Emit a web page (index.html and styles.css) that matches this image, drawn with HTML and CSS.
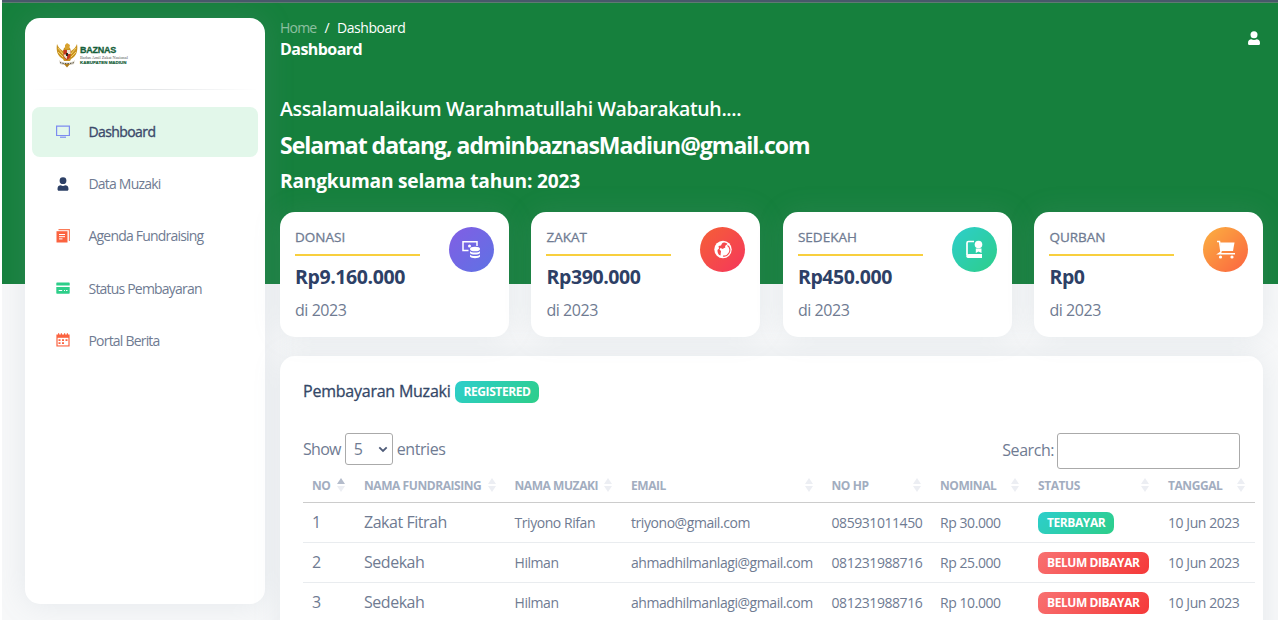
FILE: index.html
```html
<!DOCTYPE html>
<html lang="id">
<head>
<meta charset="utf-8">
<title>Dashboard</title>
<link rel="stylesheet" href="styles.css">
</head>
<body>
<div class="page">
  <aside class="sidebar">
    <div class="brand">
      <svg class="emblem" width="22" height="26" viewBox="0 0 22 26">
        <path d="M1 2c1 3 3 5 6 7l1-3 3-2 3 2 1 3c3-2 5-4 6-7 1 6 0 12-6 15l-1 2H8l-1-2C1 14 0 8 1 2z" fill="#c8921f"/>
        <path d="M2 6l5 6M2 10l5 5M20 6l-5 6M20 10l-5 5" stroke="#f0cf6b" stroke-width="1"/>
        <path d="M9 3l2-2 3 2-1 4H9z" fill="#d8a22f"/>
        <path d="M7.500 8h7v5c0 3-2 4-3.500 5-1.500-1-3.500-2-3.500-5z" fill="#c33a24"/>
        <path d="M11 8h3.500v4H11zM7.500 12.500H11V17c-2-1-3-2-3.500-4.500z" fill="#e8e2d4"/>
        <path d="M10 11h2v3h-2z" fill="#2c2418"/>
        <path d="M3 18c2 2 4 2.500 8 2.500s6-.5 8-2.500l-1 4c-2 1-4 1-7 1s-5 0-7-1z" fill="#d9d3c6"/>
        <path d="M4 20.500c3 1.500 11 1.500 14 0" fill="none" stroke="#55503f" stroke-width="1" stroke-dasharray="1.500 1"/>
        <path d="M8 22h6l-3 3.500z" fill="#b07c1a"/>
      </svg>
      <div class="brand-text">
        <div class="b1">BAZNAS</div>
        <div class="b2">Badan Amil Zakat Nasional</div>
        <div class="b3">KABUPATEN MADIUN</div>
      </div>
    </div>
    <div class="divider"></div>
    <nav class="menu">
      <a class="item active"><svg width="14" height="14" viewBox="0 0 14 14"><path d="M.6 1.100h12.800v9.400H.6z" fill="none" stroke="#7d8cf0" stroke-width="1.200"/><path d="M4 12.200h6" stroke="#7d8cf0" stroke-width="1.200"/></svg><span>Dashboard</span></a>
      <a class="item"><svg width="14" height="14" viewBox="0 0 14 14"><circle cx="7" cy="3.700" r="3.400" fill="#2d4066"/><path d="M1.500 12c0-2.700 1.500-3.700 3.400-3.700 1.200.8 3 .8 4.200 0 1.900 0 3.400 1 3.400 3.700 0 1.200-.4 1.800-1.500 1.800H3c-1.100 0-1.500-.6-1.500-1.800z" fill="#2d4066"/></svg><span>Data Muzaki</span></a>
      <a class="item"><svg width="14" height="14" viewBox="0 0 14 14"><path d="M2.500.6h10.900v11.400" fill="none" stroke="#fb7b58" stroke-width="1.100"/><path d="M.5 2.200h11v11.300H.5z" fill="#fb6340"/><path d="M3 5.500h6M3 7.700h6M3 9.900h3.500" stroke="#fff" stroke-width="1"/></svg><span>Agenda Fundraising</span></a>
      <a class="item"><svg width="14" height="14" viewBox="0 0 14 14"><path d="M1 1.500h12q.7 0 .7.700V4.500H.3V2.200q0-.7.700-.7zM.3 6h13.400v6q0 .7-.7.700H1q-.7 0-.7-.7z" fill="#2dce89"/><path d="M2.700 9.500h3.500M8 9.500h1M10 9.500h1.500" stroke="#fff" stroke-width="1"/></svg><span>Status Pembayaran</span></a>
      <a class="item"><svg width="14" height="14" viewBox="0 0 14 14"><path d="M.4 1.600H2V.3h1.200v1.300h1.600V.3H6v1.300h2V.3h1.200v1.300h1.600V.3H12v1.300h1.600v12H.4z" fill="#fb6340"/><path d="M1.600 4.800h10.800v7.600H1.600z" fill="#fff"/><path d="M2.500 7.200h2M6 7.200h2M9.500 7.200h2M2.500 10.200h2M6 10.200h2" stroke="#fb6340" stroke-width="1.800"/></svg><span>Portal Berita</span></a>
    </nav>
  </aside>
  <main class="main">
    <header class="top">
      <div>
        <div class="crumbs"><span class="home">Home</span><span class="sep">/</span><span>Dashboard</span></div>
        <div class="title">Dashboard</div>
      </div>
      <svg class="user" width="12" height="14" viewBox="0 0 12 14"><circle cx="6" cy="3.700" r="3.500" fill="#fff"/><path d="M0 12c0-2.600 1.500-3.700 3.300-3.700 1.600.9 3.800.9 5.400 0C10.500 8.300 12 9.400 12 12c0 1.400-.4 2-1.500 2h-9C.4 14 0 13.400 0 12z" fill="#fff"/></svg>
    </header>
    <section class="greeting">
      <div class="g1"><span>Assalamualaikum Warahmatullahi Wabarakatuh....</span></div>
      <div class="g2"><span>Selamat datang, adminbaznasMadiun@gmail.com</span></div>
      <div class="g3"><span>Rangkuman selama tahun: 2023</span></div>
    </section>
    <section class="stats">
      <article class="stat">
        <div class="figures"><div class="label">DONASI</div><div class="amount">Rp9.160.000</div><div class="period">di 2023</div></div>
        <div class="badge violet"><svg width="20" height="20" viewBox="0 0 20 20"><path d="M7.500 10.500H2V1.800h14V6" fill="none" stroke="#fff" stroke-width="1.500"/><circle cx="8.500" cy="6" r="1.500" fill="#fff"/><ellipse cx="14" cy="9" rx="5" ry="2.300" fill="#fff"/><path d="M9 11c1 2 9 2 10 0v2c-1 2-9 2-10 0zM9 14.500c1 2 9 2 10 0v2c-1 2.300-9 2.300-10 0z" fill="#fff"/></svg></div>
      </article>
      <article class="stat">
        <div class="figures"><div class="label">ZAKAT</div><div class="amount">Rp390.000</div><div class="period">di 2023</div></div>
        <div class="badge red"><svg width="20" height="20" viewBox="0 0 20 20"><circle cx="10" cy="9.500" r="8.700" fill="#fff"/><path d="M9 3.500c1-1.500 4-1 5.500.5l-2.500 2 .5 1.500L10 9l-2.500-1-1 1.500 1.500 1.500-.5 4.500C5 15 4.500 12 4.500 10L6 8.500 5.500 6 8 5.500z" fill="#f54a4c"/><path d="M10.500 8.500l4-2 2.500 2c.5 3-1 6-4 7.500l-3-.5L9 12z" fill="#fff"/><path d="M14.500 5.500c2.500 1.500 3 5 1.500 7.500s-4 3.500-6 3" fill="none" stroke="#f54a4c" stroke-width="1.100"/></svg></div>
      </article>
      <article class="stat">
        <div class="figures"><div class="label">SEDEKAH</div><div class="amount">Rp450.000</div><div class="period">di 2023</div></div>
        <div class="badge teal"><svg width="20" height="20" viewBox="0 0 20 20"><path d="M10 1.500H4.500Q3 1.500 3 3v12" fill="none" stroke="#fff" stroke-width="1.700"/><path d="M2.200 16q0-2 2.800-2h13v4H5q-2.800 0-2.800-2z" fill="#fff"/><circle cx="14.500" cy="4.500" r="3.800" fill="#fff"/><path d="M11.800 8.500h5.700v4.500l-3-1.500-2.700 1.500z" fill="#fff"/></svg></div>
      </article>
      <article class="stat">
        <div class="figures"><div class="label">QURBAN</div><div class="amount">Rp0</div><div class="period">di 2023</div></div>
        <div class="badge orange"><svg width="20" height="20" viewBox="0 0 20 20"><path d="M4 2.500h14.500L17 11H5z" fill="#fff"/><path d="M1 1.500h2.500L5 12l-2.500 1.800H19" fill="none" stroke="#fff" stroke-width="1.500"/><circle cx="4.500" cy="17" r="1.600" fill="#fff"/><circle cx="16" cy="17" r="1.600" fill="#fff"/></svg></div>
      </article>
    </section>
    <section class="panel">
      <div class="heading"><span class="htext">Pembayaran Muzaki</span><span class="pill ok">REGISTERED</span></div>
      <div class="tools">
        <label class="show"><span class="word">Show</span><span class="select">5<svg width="10" height="7" viewBox="0 0 10 7"><path d="M1.300 1.300L5 5l3.700-3.700" fill="none" stroke="#4e5b78" stroke-width="1.800"/></svg></span><span>entries</span></label>
        <label class="search"><span>Search:</span><input type="text"></label>
      </div>
      <table>
        <colgroup><col class="c1"><col class="c2"><col class="c3"><col class="c4"><col class="c5"><col class="c6"><col class="c7"><col class="c8"></colgroup>
        <thead><tr>
          <th><div>NO<i class="sort asc"></i></div></th><th><div>NAMA FUNDRAISING<i class="sort"></i></div></th><th><div>NAMA MUZAKI<i class="sort"></i></div></th><th><div>EMAIL<i class="sort"></i></div></th><th><div>NO HP<i class="sort"></i></div></th><th><div>NOMINAL<i class="sort"></i></div></th><th><div>STATUS<i class="sort"></i></div></th><th><div>TANGGAL<i class="sort"></i></div></th>
        </tr></thead>
        <tbody>
          <tr><td class="big">1</td><td class="big">Zakat Fitrah</td><td>Triyono Rifan</td><td>triyono@gmail.com</td><td>085931011450</td><td>Rp 30.000</td><td><span class="pill ok">TERBAYAR</span></td><td>10 Jun 2023</td></tr>
          <tr><td class="big">2</td><td class="big">Sedekah</td><td>Hilman</td><td>ahmadhilmanlagi@gmail.com</td><td>081231988716</td><td>Rp 25.000</td><td><span class="pill no">BELUM DIBAYAR</span></td><td>10 Jun 2023</td></tr>
          <tr><td class="big">3</td><td class="big">Sedekah</td><td>Hilman</td><td>ahmadhilmanlagi@gmail.com</td><td>081231988716</td><td>Rp 10.000</td><td><span class="pill no">BELUM DIBAYAR</span></td><td>10 Jun 2023</td></tr>
        </tbody>
      </table>
    </section>
  </main>
</div>
</body>
</html>
```
FILE: styles.css
```css
* { box-sizing: border-box; }
html, body { margin: 0; height: 620px; overflow: hidden; }
body { font-family: "Open Sans", "Noto Sans", sans-serif; color: #6f7b92; background: #fff; }
.page {
  height: 620px; margin: 0 2px; border-top: 2px solid #48586a; overflow: hidden;
  display: flex; align-items: flex-start; padding: 16px 15px 0 23px; gap: 15px;
  background: linear-gradient(#5f7a72 1px, #16803d 1px, #16803d 282px, #f7f8f9 282px);
}
.sidebar {
  width: 240px; height: 586px; flex: none; background: #fff; border-radius: 15px;
  box-shadow: 0 0 30px rgba(136, 152, 170, .17); padding: 0 7px;
}
.brand { height: 71px; padding: 24px 0 0 24px; display: flex; gap: 2px; }
.emblem { flex: none; }
.brand-text { color: #17603a; white-space: nowrap; padding-top: 4px; }
.b1 { font: bold 9px/9px "Liberation Sans", sans-serif; letter-spacing: -.25px; -webkit-text-stroke: .3px #17603a; }
.b2 { font: 4.300px/5px "Liberation Serif", serif; color: #555; }
.b3 { font: bold 4.400px/6px "Liberation Sans", sans-serif; letter-spacing: .05px; -webkit-text-stroke: .2px #17603a; }
.divider { height: 1px; background: linear-gradient(90deg, transparent, #e2e4e6, transparent); }
.menu { padding-top: 17px; display: flex; flex-direction: column; gap: 2px; }
.item {
  height: 50.200px; border-radius: 8px; display: flex; align-items: center; padding-left: 23.500px; gap: 19px;
  font-size: 14px; letter-spacing: -.8px; white-space: nowrap;
}
.item span { padding-bottom: 1px; }
.item svg { flex: none; margin-top: -1px; }
.item.active { background: #e2f7ea; color: #3c4a6b; letter-spacing: -.6px; -webkit-text-stroke: .35px #3c4a6b; }
.item.active svg { -webkit-text-stroke: 0; }
.main { flex: 1; min-width: 0; }
.top { display: flex; justify-content: space-between; height: 70px; color: #fff; }
.crumbs { font-size: 14px; line-height: 20px; display: flex; letter-spacing: -.45px; }
.home { opacity: .5; letter-spacing: -.8px; }
.sep { margin: 0 8px; }
.title { font-size: 16px; font-weight: 700; line-height: 22px; letter-spacing: -.55px; }
.user { margin: 13px 3px 0 0; }
.greeting { color: #fff; height: 124px; white-space: nowrap; }
.g1 { font-size: 19.500px; line-height: 42px; font-weight: 600; letter-spacing: -.36px; }
.g2 { font-size: 23px; line-height: 31px; font-weight: 700; letter-spacing: -1px; }
.g3 { font-size: 19.200px; line-height: 40px; font-weight: 700; letter-spacing: -.22px; }
.stats { display: grid; grid-template-columns: repeat(4, 228.600px); justify-content: space-between; }
.stat {
  height: 125px; padding: 15px; border-radius: 15px; background: #fff; display: flex; justify-content: space-between;
  box-shadow: 0 0 28px rgba(136, 152, 170, .15);
}
.figures { width: 125px; }
.label { font-size: 13.500px; line-height: 21px; height: 29px; border-bottom: 2px solid #f8cf3e; padding-bottom: 6px; -webkit-text-stroke: .3px #6f7b92; }
.amount { font-size: 19.500px; font-weight: 700; color: #2d4066; line-height: 27px; margin-top: 7px; letter-spacing: -.4px; }
.period { font-size: 16px; line-height: 24px; margin-top: 8px; letter-spacing: -.45px; }
.badge { width: 45px; height: 45px; border-radius: 50%; display: flex; align-items: center; justify-content: center; }
.violet { background: linear-gradient(135deg, #825ee4, #5e72e4); }
.red { background: linear-gradient(135deg, #f56036, #f5365c); }
.teal { background: linear-gradient(135deg, #2dcecc, #2dce89); }
.orange { background: linear-gradient(135deg, #fbb140, #fb6340); }
.panel {
  height: 300px; margin-top: 19px; padding: 20px 23px; background: #fff; border-radius: 15px;
  box-shadow: 0 0 28px rgba(136, 152, 170, .15);
}
.heading { display: flex; align-items: center; gap: 4px; height: 30px; font-size: 16px; color: #344767; }
.htext { letter-spacing: -.23px; -webkit-text-stroke: .3px #344767; padding-bottom: 1px; }
.pill {
  display: inline-block; height: 22px; line-height: 22px; padding: 0 9px; border-radius: 7px;
  color: #fff; font-size: 12px; font-weight: 700; letter-spacing: -.42px; vertical-align: middle;
}
.ok { background: linear-gradient(135deg, #2dcecc, #2dce89); }
.no { background: linear-gradient(135deg, #f87171, #f53939); }
.heading .pill { margin-top: 2px; }
.tools { display: flex; justify-content: space-between; height: 36px; margin-top: 27px; font-size: 16px; letter-spacing: -.45px; }
.show { display: flex; gap: 4px; align-items: center; height: 32px; }
.word { letter-spacing: -.7px; }
.select {
  width: 48px; height: 32px; border: 1px solid #aaa; border-radius: 3px; padding: 0 4px 0 8px;
  display: flex; align-items: center; justify-content: space-between;
}
.search { display: flex; gap: 3px; align-items: center; }
.search span { padding-bottom: 2px; }
.search input { width: 183px; height: 36px; border: 1px solid #aaa; border-radius: 3px; background: transparent; padding: 0; }
table { width: 952px; table-layout: fixed; border-collapse: separate; border-spacing: 0; }
.c1 { width: 52px; } .c2 { width: 150.500px; } .c3 { width: 116.500px; } .c4 { width: 200.500px; }
.c5 { width: 108.500px; } .c6 { width: 98px; } .c7 { width: 130px; } .c8 { width: 96px; }
th, td { padding: 0 0 0 9px; text-align: left; white-space: nowrap; }
th { height: 34px; padding-bottom: 1px; font-size: 12px; font-weight: 700; color: #a2adbf; border-bottom: 1px solid #ccc; letter-spacing: -.43px; }
th div { display: flex; align-items: center; justify-content: space-between; padding-right: 10px; }
td { height: 40px; font-size: 14px; border-bottom: 1px solid #e9ecef; letter-spacing: -.44px; }
td.big { font-size: 16px; padding-bottom: 2px; letter-spacing: -.47px; }
.sort { display: flex; flex-direction: column; gap: 2px; }
.sort::before, .sort::after { content: ""; border: solid transparent; border-width: 0 4px; }
.sort::before { border-bottom: 6px solid #eceef3; }
.sort::after { border-top: 6px solid #eceef3; }
.asc::before { border-bottom-color: #b4bccb; }
```
